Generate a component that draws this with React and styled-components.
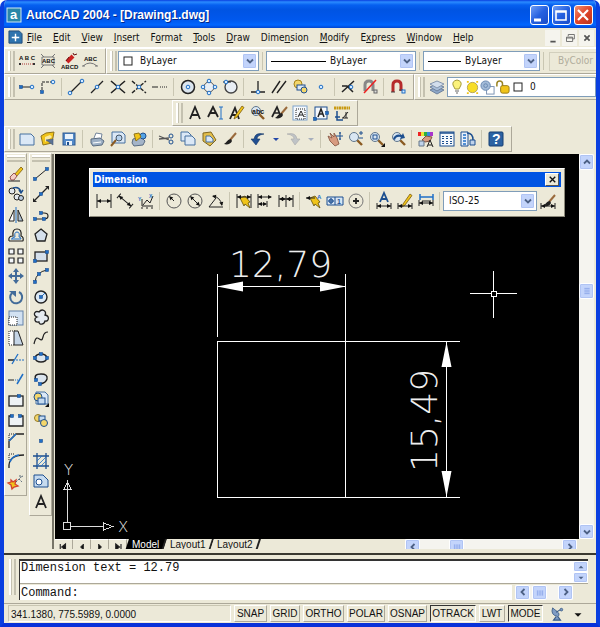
import React from 'react'
import styled, { createGlobalStyle } from 'styled-components'

const ui = '"DejaVu Sans Condensed", "Liberation Sans", sans-serif'
const arial = '"Liberation Sans", Arial, sans-serif'
const face = '#ece9d8'
const dark = '#222'
const blue = '#1f6fc6'
const navy = '#1d4f8f'
const pale = '#bfd2ea'
const gold = '#f0c419'

const Global = createGlobalStyle`
* { box-sizing: border-box; }
body { margin: 0; background: #fff; }
button, select, input { font: inherit; color: inherit; margin: 0; padding: 0; border: 0; background: none; }
svg { display: block; flex: none; }
`

const Window = styled.div`
display: flex;
flex-direction: column;
min-height: 100vh;
border: 4px solid #0a3fe0;
border-top: 0;
border-bottom-color: #0831d9;
border-radius: 7px 7px 0 0;
background: ${face};
font: 10px/14px ${ui};
color: #111;
overflow: hidden;
`

const TitleBar = styled.header`
display: flex;
align-items: center;
gap: 4px;
height: 28px;
margin: 0 -4px;
padding: 2px 6px 0;
background: linear-gradient(#0a3fe0, #2a8bff 2px, #0660f0 5px, #0054e3 10px, #0058ee 20px, #0166ff 25px, #0144d0);

h1 {
    flex: 1;
    margin: 0;
    font: bold 12px/18px ${arial};
    color: #fff;
    text-shadow: 1px 1px #00288c;
}
`

const WindowButtons = styled.div`
display: flex;
gap: 3px;
padding-right: 1px;
`

const CaptionButton = styled.button`
width: 19px;
height: 20px;
border: 1px solid #fff;
border-radius: 3px;
background: ${(p) => (p.$close ? 'linear-gradient(135deg, #f09070, #e0452a 50%, #b8331b)' : 'linear-gradient(135deg, #6f9df5, #2560e0 50%, #1a4cc8)')};
`

const MenuBar = styled.nav`
display: flex;
align-items: center;
height: 20px;
padding-left: 4px;
border-bottom: 1px solid #fff;
`

const MenuItems = styled.div`
display: flex;
flex: 1;
gap: 11px;
padding-left: 4px;
`

const MdiButton = styled.button`
display: grid;
place-items: center;
width: 15px;
height: 16px;
margin-right: 2px;
background: #f5f4ee;
`

const Row = styled.div`
display: flex;
height: 26px;
padding-left: ${(p) => p.$indent || 0}px;
`

const Toolbar = styled.div`
display: flex;
flex: ${(p) => (p.$grow ? '1' : 'none')};
align-items: center;
min-width: 0;
padding-left: 3px;
padding-right: ${(p) => (p.$grow ? 0 : 5)}px;
border: solid;
border-width: ${(p) => (p.$grow ? '1px 0 1px 1px' : '1px')};
border-color: #fff #aca899 #aca899 #fff;
overflow: hidden;
`

const Grip = styled.span`
flex: none;
width: 7px;
height: ${(p) => p.$h || 20}px;
margin-right: 1px;
border: solid;
border-width: 0 2px 0 2px;
border-color: #c4c1b0 #c4c1b0 #c4c1b0 #fff;
background: linear-gradient(90deg, #c4c1b0 1px, ${face} 1px 3px);
`

const ToolButton = styled.button`
display: grid;
place-items: center;
flex: none;
width: ${(p) => (p.$narrow ? 14 : 21)}px;
height: 20px;
`

const Separator = styled.span`
flex: none;
width: 1px;
height: 18px;
margin: 0 3px;
background: #c9c6b2;
`

const ComboBox = styled.label`
display: flex;
align-items: center;
flex: ${(p) => (p.$w ? 'none' : '1')};
width: ${(p) => (p.$w ? p.$w + 'px' : 'auto')};
height: 20px;
padding: 1px;
border: 1px solid #7f9db9;
background: #fff;

select {
    flex: 1;
    min-width: 0;
    height: 16px;
    padding-left: 4px;
    appearance: none;
    outline: none;
}
`

const ScrollButton = styled.button`
display: grid;
place-items: center;
flex: none;
width: 15px;
height: ${(p) => p.$h || 15}px;
border: 1px solid #fff;
border-radius: 2px;
background: #c3d4fb;
box-shadow: inset 0 0 0 1px #b0c4f4;
overflow: hidden;
`

const Disabled = styled.button`
flex: 1;
height: 19px;
margin-left: 2px;
padding-left: 8px;
border: 1px solid #d2cfbd;
border-right: 0;
color: #b0ad9c;
text-align: left;
`

const Workspace = styled.main`
display: flex;
flex: 1;
min-height: 397px;
`

const Palettes = styled.div`
display: flex;
align-items: flex-start;
width: 48px;
padding-top: 1px;
gap: 2px;
`

const Palette = styled.div`
display: flex;
flex-direction: column;
align-items: center;
justify-content: space-between;
width: 23px;
height: ${(p) => p.$h}px;
padding: 1px 0 4px;
border: 1px solid #fff;
border-right-color: #aca899;
border-bottom-color: #aca899;
`

const PaletteGrip = styled.span`
width: 18px;
height: 7px;
border: solid;
border-width: 2px 0;
border-color: #fff #c4c1b0 #c4c1b0;
background: linear-gradient(#c4c1b0 1px, ${face} 1px);
`

const PaletteButton = styled.button`
display: grid;
place-items: center;
width: 20px;
height: 18px;
`

const Document = styled.section`
display: flex;
flex: 1;
flex-direction: column;
min-width: 0;
margin-top: 2px;
padding: 0 2px 0 1px;
border-left: 2px solid #777568;
`

const View = styled.div`
display: flex;
flex: 1;
min-height: 0;
`

const Canvas = styled.div`
position: relative;
flex: 1;
min-width: 0;
background: #000;
overflow: hidden;
`

const VScroll = styled.div`
display: flex;
flex-direction: column;
width: 15px;
background: #f5f4ef;
`

const HScroll = styled.div`
display: flex;
width: ${(p) => p.$w}px;
background: #f5f4ef;
`

// empty part of a scroll track, sized by its share of the range
const Track = styled.span`
flex: ${(p) => p.$share};
`

const TabStrip = styled.div`
display: flex;
align-items: flex-start;
height: 10px;
padding-right: 17px;
overflow: hidden;
font: 10px/12px ${arial};
`

const TabArrow = styled.button`
display: grid;
place-items: center;
flex: none;
width: 18px;
height: 14px;
border-right: 1px solid #aca899;
border-top: 1px solid #fff;
`

const SheetTab = styled.button`
flex: none;
height: 12px;
padding: 0 4px 0 5px;
border-right: 2px solid #222;
background: ${(p) => (p.$active ? '#000' : face)};
color: ${(p) => (p.$active ? '#fff' : '#111')};
transform: skewX(-18deg);

span {
    display: block;
    transform: skewX(18deg);
}
`

const FloatingBar = styled.div`
position: absolute;
left: 34px;
top: 14px;
width: 476px;
padding: 3px;
border: 1px solid #fff;
border-right-color: #8c897a;
border-bottom-color: #8c897a;
background: ${face};

header {
    display: flex;
    align-items: center;
    justify-content: space-between;
    height: 15px;
    padding: 0 2px 0 1px;
    background: #0054e3;
    color: #fff;
    font: bold 10px/14px ${ui};
}
header button {
    display: grid;
    place-items: center;
    width: 14px;
    height: 13px;
    background: ${face};
    border: 1px solid #fff;
    border-right-color: #555;
    border-bottom-color: #555;
}
`

const FloatingTools = styled.div`
display: flex;
align-items: center;
height: 25px;
margin-top: 1px;
`

const CommandDock = styled.section`
display: flex;
margin-top: 4px;
padding: 4px 8px 3px 5px;
border-top: 2px solid #3a3931;
gap: 2px;
`

const CommandWindow = styled.div`
flex: 1;
min-width: 0;
border-top: 2px solid #333;
border-left: 1px solid #333;
font: 12px/14px "Liberation Mono", "Courier New", monospace;
`

const History = styled.div`
display: flex;
height: 23px;
justify-content: space-between;
padding-left: 1px;
background: #fff;
border-bottom: 1px solid #aca899;
line-height: 15px;
`

const Prompt = styled.div`
display: flex;
align-items: center;
height: 16px;
padding-right: 15px;

label {
    padding-left: 1px;
}
input {
    flex: 1;
    min-width: 0;
    margin-right: 3px;
    outline: none;
}
label, input {
    height: 15px;
    line-height: 17px;
    background: #fff;
}
`

const StatusBar = styled.footer`
display: flex;
align-items: center;
height: 20px;
padding-left: 4px;
border-top: 1px solid #aca899;
font: 10px/14px ${arial};
`

const Coordinates = styled.div`
width: 223px;
height: 17px;
margin-right: 3px;
padding: 2px 2px 0;
border: 1px solid #c9c6b2;
border-right-color: #fff;
border-bottom-color: #fff;
`

const StatusToggle = styled.button`
width: ${(p) => p.$w}px;
height: 17px;
margin-right: 3px;
white-space: nowrap;
border: 1px solid;
border-color: ${(p) => (p.$on ? '#333 #fff #fff #333' : '#fff #aca899 #aca899 #fff')};
`

const Dot = ({ x, y }) => <circle cx={x} cy={y} r="1.8" fill="#d8ecff" stroke={blue} />
const Sq = ({ x, y }) => <rect x={x - 1.5} y={y - 1.5} width="3" height="3" fill={blue} stroke={navy} strokeWidth=".6" />
const Arrow = ({ x, y, r = 0 }) => <path d="M0 0 4-2V2Z" fill="#111" stroke="none" transform={`translate(${x} ${y}) rotate(${r})`} />
const Letters = ({ x = 0, y, size = 6, children, fill = '#111' }) => (
    <text x={x} y={y} fontSize={size} fontFamily="Liberation Sans" fontWeight="bold" fill={fill} stroke="none">{children}</text>
)
const Glass = ({ x = 6, y = 6 }) => (
    <>
        <path d={`M${x + 3} ${y + 3}l5 5`} stroke="#8a5a22" strokeWidth="2.4" />
        <circle cx={x} cy={y} r="4.5" fill="#d9e6f2" stroke="#60768c" />
    </>
)
const Pencil = () => <path d="M6 11 13 1l2 1.500L8 12l-3 2Z" fill={gold} stroke="#7a5a10" strokeWidth=".8" />
const Brush = ({ x = 0 }) => (
    <g transform={`translate(${x} 0)`}>
        <path d="m14 2-6 7" stroke="#9a6a3c" strokeWidth="2" />
        <path d="M9 8c-3 0-4 3-7 5 3 1 7 0 8-3Z" fill="#222" stroke="none" />
    </g>
)
const Bolt = () => <path d="M4 5 9 3l5 6-2 1 2 5-5-4-1 2Z" fill={gold} stroke="#5f4c08" strokeWidth=".8" />
const Bracket = ({ y = 11, x1 = 1, x2 = 15, h = 3 }) => (
    <>
        <path d={`M${x1} ${y - h}v${h * 2}M${x2} ${y - h}v${h * 2}M${x1} ${y}H${x2}`} />
        <Arrow x={x1} y={y} />
        <Arrow x={x2} y={y} r={180} />
    </>
)
const Page = ({ x, y, w = 10, h = 10 }) => <path d={`M${x} ${y}h${w - 3}l3 3v${h - 3}h-${w}Z`} fill="#dbe8f6" stroke="#47709f" />

const icons = {
    text1: <><Letters x={0} y={7} size={6}>A B C</Letters><path d="M1 11h14" stroke="#a33" strokeDasharray="1 1" /><path d="M0 10h2v2H0ZM14 10h2v2h-2Z" fill="#333" stroke="none" /></>,
    text2: <><path d="m1 1 3 3M15 1l-3 3M1 15l3-3M15 15l-3-3M2 4h12v8H2Z" stroke="#777" /><Letters x={2} y={10} size={6}>ABC</Letters></>,
    text3: <><path d="m12 3-6 6" stroke="#c22" strokeWidth="4" /><path d="m5 8 3-4M12 0l1 2 3-1" stroke="#611" /><Letters x={0} y={16} size={6}>ABCD</Letters></>,
    text4: <><Letters x={2} y={8} size={6}>ABC</Letters><path d="M1 13q7-6 14 0" stroke="#777" /><path d="M0 13h3M13 13h3" stroke="#777" /></>,
    track: <><path d="M3 8h10" /><Sq x={2} y={8} /><Dot x={13} y={8} /></>,
    from: <><path d="M2 11V3h10" strokeDasharray="3 1" /><Sq x={2} y={13} /><Dot x={13} y={3} /></>,
    endpoint: <><path d="M2 14 14 2" strokeWidth="1.3" /><Dot x={2} y={14} /><Dot x={14} y={2} /></>,
    midpoint: <><path d="M2 14 14 2" strokeWidth="1.3" /><Dot x={8} y={8} /></>,
    intersect: <><path d="M1 2 15 14M1 14 15 2" strokeWidth="1.6" /><Dot x={8} y={8} /></>,
    apparent: <><path d="M1 2 15 14M1 14 15 2" strokeWidth="1.4" strokeDasharray="4 1.500" /><Dot x={8} y={8} /></>,
    extension: <path d="M0 8h6M8 8h1M10 8h1M12 8h1M14 8h1" />,
    center: <><circle cx="8" cy="8" r="6.500" strokeWidth="1.500" fill="#dbe5ee" /><Dot x={8} y={8} /></>,
    quadrant: <><circle cx="8" cy="8" r="5" stroke="#555" fill="#e8eef4" /><Dot x={8} y={2} /><Dot x={8} y={14} /><Dot x={2} y={8} /><Dot x={14} y={8} /></>,
    tangent: <><circle cx="9" cy="8" r="6" strokeWidth="1.400" stroke="#444" fill="#e8eef4" /><path d="M1 3h8" /><Dot x={4} y={3} /></>,
    perpendicular: <><path d="M1 13h14M8 12V2" strokeWidth="1.300" /><Dot x={8} y={13} /></>,
    parallel: <path d="M1 14 9 2M6 14 15 2" strokeWidth="1.400" />,
    insert: <><circle cx="6" cy="5" r="4" fill="#f4d76b" stroke="#a5831a" /><rect x="5" y="6" width="8" height="5" fill="#ddeaf6" stroke={navy} /><circle cx="12" cy="11" r="3" fill="#f4d76b" stroke={navy} /></>,
    node: <Dot x={8} y={8} />,
    nearest: <><path d="M1 13 13 2M1 7h5l6 6" strokeWidth="1.500" /><Dot x={10} y={8} /></>,
    none: <><path d="M3 12V6q0-4 4-4t4 4v6" strokeWidth="3" stroke="#888" /><path d="M2 14 14 1" stroke="#e22" strokeWidth="1.500" /><rect x="12" y="11" width="3" height="3" fill="#ddd" stroke="#666" /></>,
    snap: <><path d="M3 13V6q0-4 4-4t4 4v6" strokeWidth="3" stroke="#b52a2a" /><path d="M1 13h4M9 11h4" stroke="#444" /><rect x="12" y="11" width="3" height="3" fill="#d8ecff" stroke={blue} /></>,
    layers: <><path d="m1 11 7-3 7 3-7 4Z" fill="#8da7c8" stroke="#6e819c" /><path d="m1 8 7-3 7 3-7 4Z" fill="#a9bfda" stroke="#6e819c" /><path d="m1 5 7-3 7 3-7 4Z" fill="#d2deec" stroke="#8596ad" /></>,
    letter: <path d="M3 14 8 2l5 12M5 10h6" strokeWidth="1.800" />,
    letterEdit: <><path d="m0 12 5-10 5 10M2 8h6" strokeWidth="1.800" /><path d="M11 2h4M13 2v12M11 14h4" stroke={blue} /></>,
    letterPencil: <><path d="m1 14 5-11 4 11M3 10h5" strokeWidth="1.800" /><Pencil /></>,
    find: <><Glass /><Letters x={2} y={9} size={7}>abc</Letters></>,
    letterBrush: <><path d="m1 12 5-10 4 10M3 8h5" strokeWidth="1.700" /><Brush x={2} /></>,
    letterDash: <><rect x="1" y="1" width="14" height="14" fill="#f6f9fc" stroke="#7fa3cc" /><rect x="4" y="4" width="9" height="10" strokeDasharray="1 1" /><path d="m6 12 3-6 3 6M7 10h4" /></>,
    letterBox: <><rect x="2" y="2" width="12" height="12" fill="#f6f9fc" stroke={navy} /><path d="m5 12 3-8 3 8M6 9h4" strokeWidth="1.500" /><Sq x={2} y={14} /><Sq x={14} y={8} /></>,
    convert: <><path d="M0 3h16" stroke="#c99a12" strokeWidth="3" strokeDasharray="2 .5" /><path d="M3 6v9h6M1 12h5" stroke={navy} strokeWidth="1.500" /><path d="m9 13 5-6M8 13h6M12 7v6" /></>,
    new: <Page x={1} y={3} w={14} h={11} />,
    open: <><path d="m1 5 5-3 8-1-2 11-9 2Z" fill={gold} stroke="#8f731b" /><path d="m5 6 5-2 2 2-7 5Z" fill="#f9e9a0" stroke="none" /><path d="m6 9 7 5V8Z" fill="#5b7395" stroke="#44597a" strokeWidth=".6" /></>,
    save: <><rect x="2" y="2" width="12" height="12" fill="#5289c8" stroke="#315c92" /><path d="M4 3h8v5H4ZM5 10h6v4H5Z" fill="#eaf3fb" stroke="none" /><path d="M6 11h2v3H6Z" fill={navy} stroke="none" /></>,
    print: <><path d="m5 7 2-5 6 1-1 5" fill="#fff" stroke="#718399" /><path d="m2 8 9-1 4 3-2 4-9 1-2-3Z" fill="#9cafc4" stroke="#596b80" /><path d="m4 12 8-1" stroke="#fff" /></>,
    preview: <><Page x={2} y={1} w={13} h={11} /><path d="m6 9-5 6" stroke="#8a5a22" strokeWidth="2" /><circle cx="9" cy="7" r="3" fill="#b5d1ed" stroke="#456" /></>,
    publish: <><path d="m2 8 8-2 4 4-2 4-9 1-2-3Z" fill="#a4b4c8" stroke="#596b80" /><circle cx="12" cy="5" r="3" fill="#54a3e4" stroke={navy} /><path d="m3 3 5-1 2 4-5 4Z" fill={gold} stroke="#8f731b" /></>,
    cut: <><path d="M0 5l10 4M0 8l10-1" stroke="#555" strokeWidth="1.300" /><circle cx="12" cy="5" r="2" stroke={navy} /><circle cx="12" cy="11" r="2" stroke={navy} /></>,
    copy: <><Page x={1} y={1} w={10} h={9} /><Page x={5} y={5} w={10} h={9} /></>,
    paste: <><path d="m2 2 8-1 5 8-6 6-7-5Z" fill="#e2bd4a" stroke="#80671f" /><Page x={5} y={5} w={7} h={6} /></>,
    match: <Brush />,
    undo: <path d="M14 3Q5 1 4 8H1l5 6 4-6H7q0-4 7-5Z" fill="#214f91" stroke="#163866" strokeWidth=".6" />,
    redo: <path d="M2 3q9-2 10 5h3l-5 6-4-6h3q0-4-7-5Z" fill="#bfc3c6" stroke="#aaa" strokeWidth=".6" />,
    drop: <path d="M5 7h6L8 10Z" fill="#2448a8" stroke="none" />,
    dropOff: <path d="M5 7h6L8 10Z" fill="#a7afbd" stroke="none" />,
    pan: <><path d="m1 5 4 2-2-5 4 4V2l3 5 2 6-4 2-5-5Z" fill="#d79b80" stroke="#80513f" strokeWidth=".8" /><path d="M13 1v8M9 5h7M12 2h2M12 8h2" stroke={navy} /></>,
    zoomRt: <><Glass /><path d="M13 0v4M11 2h4M11 7h4" stroke={navy} /></>,
    zoomWin: <><Glass /><rect x="4" y="4" width="4" height="4" stroke={navy} /><path d="m12 16 4-4v4Z" fill="#111" stroke="none" /></>,
    zoomPrev: <><Glass x={7} /><path d="M3 8q2-6 9-4l1-2 2 5-5 1 1-2Q6 5 5 9Z" fill={navy} stroke="none" /></>,
    props: <><path d="M0 1h3v4H0Z" fill="#e22" stroke="none" /><path d="M3 1h3v4H3Z" fill="#e8e337" stroke="none" /><path d="M6 1h3v4H6Z" fill="#2cae44" stroke="none" /><path d="M9 1h3v4H9Z" fill="#38d" stroke="none" /><path d="M12 1h3v4h-3Z" fill="#a3c" stroke="none" /><path d="m4 9 4-4 6 1-2 4-5 1Z" fill="#d79b80" stroke="#80513f" /><path d="M1 10h5v5H1Z" fill={pale} stroke="#678" /><path d="m9 16 3-7 3 7M10 14h4" /></>,
    design: <><rect x="1" y="1" width="14" height="14" fill="#f6f9fc" stroke={navy} /><path d="M1 2h14" stroke={navy} strokeWidth="1.500" /><path d="M4 5v3M4 10v3M12 5v3M12 10v3M8 5v3M8 10v3" stroke={navy} strokeWidth="2" strokeDasharray="1 1" /></>,
    palettes: <><path d="M1 1h7v14H1Z" fill="#e7f0fa" stroke={navy} /><path d="M3 4h3M3 7h3M3 10h3M3 13h3" stroke={blue} strokeWidth="1.500" /><path d="M7 2q6 0 6 7" stroke={navy} strokeWidth="1.500" /><path d="M10 9h5v5h-5Z" fill={pale} stroke={navy} /></>,
    help: <><rect x="1" y="1" width="14" height="14" rx="1" fill="#2c62a2" stroke="#173f72" /><Letters x={4} y={13} size={14} fill="#fff">?</Letters></>,
    erase: <><path d="m6 9 7-8 2 2-7 8Z" fill={gold} stroke="#7a5a10" strokeWidth=".8" /><path d="m2 11 4-4 3 3-3 4H3Z" fill="#f4cfc7" stroke="#955" /><path d="M0 15h12" /></>,
    copyObj: <><circle cx="4" cy="5" r="3" fill="#e2e8ee" /><circle cx="9" cy="11" r="3" fill="#e2e8ee" /><circle cx="13" cy="12" r="2.500" fill="#b9cde4" /><path d="M5 2q6-2 8 4M11 4l2 3 2-3" stroke={navy} strokeWidth="1.500" /></>,
    mirror: <><path d="M6 3v11H1Z" fill="#fff" /><path d="M10 3v11h5Z" fill="#aebfce" /><path d="M8 0v16" stroke={blue} /></>,
    offset: <><path d="M1 14h14M1 14q-1-5 4-5-1-7 4-7t4 7q3 1 2 5" strokeWidth="1.200" /><path d="M3 12h10M4 12q0-2 3-2-1-5 2-5t2 5q2 0 2 2" stroke={blue} /></>,
    array: <g fill="#f5f8fb" strokeWidth="1.200"><path d="M1 1h5v5H1ZM10 1h5v5h-5ZM1 10h5v5H1ZM10 10h5v5h-5Z" /></g>,
    move: <><path d="M8 3v10M3 8h10" stroke="#426b99" strokeWidth="2" /><path d="m8 0 3 4H5ZM8 16l3-4H5ZM0 8l4-3v6ZM16 8l-4-3v6Z" fill="#426b99" stroke="none" /></>,
    rotate: <><path d="M4 4a6 6 0 1 0 7-1" stroke="#426b99" strokeWidth="2" /><path d="M1 2h7v6Z" fill="#426b99" stroke="none" /></>,
    scale: <><rect x="1" y="1" width="14" height="14" fill="#d2e1f1" stroke="#6483aa" /><rect x="1" y="7" width="8" height="8" fill="#fff" strokeDasharray="1 1" /></>,
    stretch: <><path d="M1 1v14h6V1Z" strokeDasharray="1 1" fill="#fff" /><path d="M6 1v14h9L10 1Z" fill="#c5d5e6" /></>,
    trim: <><path d="M0 9h6" strokeWidth="1.500" /><path d="M8 9h8" stroke={blue} strokeDasharray="2 1" /><path d="m4 13 6-10" stroke={blue} strokeWidth="1.300" /></>,
    extend: <><path d="M0 9h6" /><path d="M7 9h4" stroke={blue} strokeDasharray="1 1" /><path d="m9 13 6-10" stroke={blue} strokeWidth="1.500" /></>,
    breakPt: <><rect x="1" y="4" width="14" height="10" fill="#eef2f5" strokeWidth="1.300" /><Sq x={11} y={4} /></>,
    break: <><path d="M4 4H1v10h14V4h-3" fill="#eef2f5" strokeWidth="1.300" /><Sq x={4} y={4} /><Sq x={12} y={4} /></>,
    chamfer: <><path d="M1 15V8l7-7h8" strokeWidth="1.300" /><path d="M1 7V1h6" strokeDasharray="1 1" /><path d="m1 8 7-7" stroke={blue} strokeWidth="1.500" /></>,
    fillet: <><path d="M1 15q-1-13 15-13" strokeWidth="1.300" /><path d="M1 7V1h6" strokeDasharray="1 1" /><path d="M2 9q2-6 9-7" stroke={blue} strokeWidth="1.500" /></>,
    explode: <><path d="m3 6 2 2 3-2-1 4 3 2-4 1-2 2-1-4-3-2 3-1Z" fill={gold} stroke="#d3412d" strokeWidth="1.300" /><path d="m8 8 5-5M11 5l3 3M12 1v2M15 2l-2 1" stroke="#586878" strokeDasharray="2 1" /></>,
    line: <><path d="M2 13 14 3" /><Sq x={2} y={13} /><Sq x={14} y={3} /></>,
    xline: <><path d="M2 14 14 2" strokeWidth="1.300" /><path d="M0 16v-4l4 4ZM16 0v4l-4-4Z" fill="#222" stroke="none" /><Sq x={8} y={8} /></>,
    pline: <><path d="M2 12h9q4 0 4-3t-4-3H9" strokeWidth="1.200" /><Sq x={2} y={12} /><Sq x={11} y={12} /><Sq x={8} y={6} /></>,
    polygon: <path d="m8 2 6 5-2 7H4L2 7Z" fill="#d5e0eb" strokeWidth="1.300" />,
    rectangle: <><rect x="2" y="4" width="12" height="9" fill="#d5e0eb" strokeWidth="1.300" /><Sq x={2} y={13} /><Sq x={14} y={4} /></>,
    arc: <><path d="M2 14Q3 4 14 2" /><Sq x={2} y={14} /><Sq x={6} y={6} /><Sq x={14} y={2} /></>,
    circle: <><circle cx="8" cy="8" r="6" fill="#dde9f3" strokeWidth="1.400" /><path d="m8 8 4-4" stroke={blue} /><Sq x={8} y={8} /></>,
    cloud: <path d="M4 8C-1 6 2 1 6 3c3-4 8-1 6 3 5 1 4 7 0 6-1 4-6 4-6 1-5 1-5-4-2-5Z" fill="#e5ebf0" strokeWidth="1.300" />,
    spline: <path d="M1 14C4 0 8 16 10 7q1-5 5-5" strokeWidth="1.200" />,
    ellipse: <><ellipse cx="8" cy="8" rx="6" ry="4" fill="#dbe5ee" strokeWidth="1.400" /><Sq x={2} y={8} /><Sq x={14} y={8} /><Sq x={8} y={4} /></>,
    ellArc: <><path d="M3 9q-3-6 5-6 7 0 6 5-1 4-7 5" fill="#dbe5ee" strokeWidth="1.400" /><Sq x={3} y={9} /><Sq x={7} y={13} /></>,
    block: <><Page x={3} y={1} w={12} h={12} /><circle cx="5" cy="6" r="4" fill="#f4d76b" stroke={navy} /><rect x="5" y="7" width="7" height="6" fill="#c6dbef" stroke={navy} /><path d="m12 16 4-4v4Z" fill="#111" stroke="none" /></>,
    makeBlock: <><circle cx="5" cy="6" r="3.500" fill="#f4d76b" stroke="#967a22" /><rect x="6" y="4" width="6" height="5" fill="#c6dbef" stroke={navy} /><circle cx="11" cy="11" r="3.500" fill="#f4d76b" stroke={navy} /></>,
    point: <Sq x={8} y={9} />,
    hatch: <><path d="M4 0v16M13 0v16M0 3h16M0 13h16" stroke={navy} strokeWidth="1.300" /><path d="m4 8 5-5M4 13l9-9M8 13l5-5" stroke={blue} strokeWidth=".8" /></>,
    region: <><path d="M1 2h9l5 5v7H1Z" fill="#c6dbef" stroke={navy} /><circle cx="6" cy="9" r="3" fill="#fff" stroke={navy} /></>,
    linear: <Bracket y={8} h={7} />,
    aligned: <g transform="rotate(40 8 8)"><Bracket y={8} x1={0} x2={16} /></g>,
    ordinate: <><path d="M4 6v7h11M5 12l4-5 3 3 3-7" /><path d="M4 14v2M9 14v2M14 14v2" /><Letters x={0} y={8} size={5} fill={blue}>Y</Letters><Letters x={11} y={5} size={5} fill={blue}>X</Letters></>,
    radius: <><circle cx="8" cy="8" r="7" stroke="#555" /><path d="m8 8-4-4" /><Arrow x={3} y={3} r={45} /></>,
    diameter: <><circle cx="8" cy="8" r="7" stroke="#555" /><path d="m4 4 8 8" /><Arrow x={3} y={3} r={45} /><Arrow x={13} y={13} r={225} /></>,
    angular: <><path d="M1 14 8 5M1 14h14M5 3q7 1 9 9" /><Arrow x={14} y={13} r={260} /><Arrow x={4} y={3} r={10} /></>,
    quick: <><Bolt /><path d="M1 1v14M15 1v14" /><path d="M1 4h14" /><Arrow x={1} y={4} /><Arrow x={15} y={4} r={180} /></>,
    baseline: <><path d="M1 1v14M1 4h13M1 11h8M10 8v6" /><Arrow x={1} y={4} /><Arrow x={15} y={4} r={180} /><Arrow x={1} y={11} /><Arrow x={10} y={11} r={180} /></>,
    continue: <><path d="M1 2v12M8 2v12M15 2v12M1 6h14" /><Arrow x={8} y={6} r={180} /><Arrow x={8} y={6} /><Arrow x={1} y={6} /><Arrow x={15} y={6} r={180} /></>,
    leader: <><Bolt /><path d="M0 5h9" /><Arrow x={0} y={5} /><Letters x={11} y={6} size={6} fill={blue}>A</Letters></>,
    tolerance: <><path d="M0 4h16v8H0ZM8 4v8" fill="#d7e5f4" stroke={navy} /><circle cx="4" cy="8" r="2" stroke={navy} /><path d="M4 5v6M1 8h6" stroke={navy} /><Letters x={10} y={11} size={7} fill={navy}>1</Letters></>,
    centerMark: <><circle cx="8" cy="8" r="7" stroke="#777" /><path d="M8 5v6M5 8h6" strokeWidth="1.800" /></>,
    dimEdit: <><path d="m4 9 4-9 4 9M5 6h6" stroke={navy} strokeWidth="1.800" /><Bracket y={13} /></>,
    dimText: <><Pencil /><Bracket y={13} /></>,
    dimUpdate: <><path d="M2 1v6M15 1v6M2 4h13" stroke={blue} strokeWidth="1.500" /><path d="M4 8h9" /><Bracket y={10} /></>,
    dimStyle: <><Brush x={1} /><Bracket y={13} /></>,
    minimize: <path d="M3 13h7" stroke="#fff" strokeWidth="3" />,
    maximize: <path d="M3 4h10v9H3ZM3 5h10" stroke="#fff" strokeWidth="1.600" />,
    close: <path d="m3 3 10 10M13 3 3 13" stroke="#fff" strokeWidth="2.200" />,
    mdiMin: <path d="M5 12h6" strokeWidth="2" stroke="#555" />,
    mdiRestore: <path d="M6 6V4h7v5h-2M4 7h7v5H4ZM4 8h7" stroke="#666" />,
    mdiClose: <path d="m5 5 6 6M11 5l-6 6" strokeWidth="2" stroke="#555" />,
    smallX: <path d="m4 4 8 8M12 4l-8 8" strokeWidth="2" stroke="#111" />,
    left: <path d="M10 4 6 8l4 4" strokeWidth="2.400" stroke="#4d6185" />,
    right: <path d="m6 4 4 4-4 4" strokeWidth="2.400" stroke="#4d6185" />,
    up: <path d="m4 10 4-4 4 4" strokeWidth="2.400" stroke="#4d6185" />,
    down: <path d="m4 6 4 4 4-4" strokeWidth="2.400" stroke="#4d6185" />,
    thumb: <path d="M5 5v6M7 5v6M9 5v6M11 5v6" stroke="#8aa5e8" />,
    thumbV: <path d="M5 5h6M5 7h6M5 9h6M5 11h6" stroke="#8aa5e8" />,
    tinyUp: <path d="M4 10h8L8 6Z" fill="#4d6185" stroke="none" />,
    tinyDown: <path d="M4 6h8l-4 4Z" fill="#4d6185" stroke="none" />,
    first: <path d="M3 4v8M10 4v8L5 8Z" fill="#111" strokeWidth="1.500" />,
    prev: <path d="M10 4v8L6 8Z" fill="#111" />,
    next: <path d="M6 4v8l4-4Z" fill="#111" />,
    last: <path d="M12 4v8M5 4v8l5-4Z" fill="#111" strokeWidth="1.500" />,
    dish: <><path d="M3 1q-3 8 6 10Q12 8 8 5T3 1Z" fill="#7f9cc4" stroke="#3d5d87" /><path d="m7 6 5-3M7 11l-3 4h8l-3-4" fill="#7f9cc4" stroke="#3d5d87" strokeWidth="1.300" /><circle cx="13" cy="3" r="1.500" fill="#7f9cc4" stroke="#3d5d87" /></>,
    menuDrop: <path d="M4 7h8l-4 4Z" fill="#111" stroke="none" />,
    app: <><rect x="1" y="1" width="14" height="14" fill="#2b86a8" stroke="#cfe9f2" /><Letters x={4} y={12} size={13} fill="#fff">a</Letters></>,
    doc: <><path d="M1 1h11l3 3v10H1Z" fill="#2f74ae" stroke="#234b78" /><path d="M8 4v8M4 8h8" stroke="#fff" strokeWidth="1.500" /><rect x="7" y="7" width="2" height="2" fill="#fff" stroke="none" /></>,
    swatch: <rect x="4" y="4" width="8" height="8" fill="#fff" />,
    bulb: <><path d="M8 1q5 1 4 5l-2 4H6L4 6q-1-4 4-5Z" fill="#fbf27b" stroke="#a49b3a" /><path d="M6 12h4M7 14h2" stroke="#666" /></>,
    sun: <><path d="M2 2h2M12 2h2M2 14h2M12 14h2" stroke={gold} strokeWidth="2" /><circle cx="8" cy="8" r="5.500" fill="#f8dd25" stroke="#b2a35c" /></>,
    freeze: <><rect x="7" y="7" width="8" height="8" fill="#fff" stroke="#778fb0" /><circle cx="6" cy="6" r="5" fill="#a2bad7" stroke="#6787b1" /><circle cx="6" cy="6" r="2" stroke="#6787b1" /></>,
    lock: <><path d="M2 7V4q0-3 3-3t3 3v3" stroke="#9a8422" strokeWidth="1.600" /><rect x="6" y="6" width="9" height="8" rx="2" fill={gold} stroke="#957917" /></>,
}

const Icon = ({ name, size = 16 }) => (
    <svg width={size} height={size} viewBox="0 0 16 16" fill="none" stroke={dark} overflow="visible" aria-hidden="true">{icons[name]}</svg>
)

// '|' marks a separator between groups
const Tools = ({ items }) => items.split(' ').map((name, i) => (
    name === '|'
        ? <Separator key={i} />
        : <ToolButton key={i} aria-label={name} $narrow={name.startsWith('drop')}><Icon name={name} /></ToolButton>
))

const SideBar = ({ items, height }) => (
    <Palette $h={height}>
        <PaletteGrip />
        {items.split(' ').map((name) => (
            <PaletteButton key={name} aria-label={name}><Icon name={name} /></PaletteButton>
        ))}
    </Palette>
)

const Combo = ({ label, value, width, lead, arrow = true }) => (
    <ComboBox $w={width}>
        {lead}
        <select aria-label={label} defaultValue={value}><option>{value}</option></select>
        {arrow && <ScrollButton as="span" $h={16}><Icon name="down" size={12} /></ScrollButton>}
    </ComboBox>
)

const HorizontalScroll = ({ width, before, after, label }) => (
    <HScroll $w={width}>
        <ScrollButton aria-label={`Scroll ${label} left`}><Icon name="left" size={12} /></ScrollButton>
        <Track $share={before} />
        <ScrollButton aria-label={`${label} position`}><Icon name="thumb" size={14} /></ScrollButton>
        <Track $share={after} />
        <ScrollButton aria-label={`Scroll ${label} right`}><Icon name="right" size={12} /></ScrollButton>
    </HScroll>
)

const LineSample = ({ width }) => (
    <svg width={width} height="2"><path d={`M3 1H${width}`} stroke="#000" shapeRendering="crispEdges" /></svg>
)

const menus = [
    ['', 'F', 'ile'], ['', 'E', 'dit'], ['', 'V', 'iew'], ['', 'I', 'nsert'], ['F', 'o', 'rmat'], ['', 'T', 'ools'],
    ['', 'D', 'raw'], ['Dime', 'n', 'sion'], ['', 'M', 'odify'], ['E', 'x', 'press'], ['', 'W', 'indow'], ['', 'H', 'elp'],
]

const toggles = [
    ['SNAP', 33], ['GRID', 30], ['ORTHO', 41], ['POLAR', 38], ['OSNAP', 39], ['OTRACK', 46, true], ['LWT', 26], ['MODE', 35, true],
]

const Drawing = () => (
    <svg width="524" height="385" viewBox="55 154 524 385" fill="none" stroke="#fff" shapeRendering="crispEdges">
        <path d="M217.500 274V337M217.500 342V497M345.500 274V497M217 341.500H460M217 497.500H460" />
        <path d="M218 286.500H345M446.500 342V497" />
        <g fill="#fff" stroke="none" shapeRendering="auto">
            <path d="m217 286.500 26-5v10ZM346 286.500l-26-5v10ZM446.500 342l-5 25h10ZM446.500 497l-5-26h10Z" />
        </g>
        <path d="M493.500 271V291M493.500 296V318M470 293.500H491M496 293.500H517M491.500 291.500h5v5h-5Z" />
        <path d="M63.500 522.500h7v7h-7ZM67.500 522V482M71 526.500H103M64 489.500h7l-3.500-8ZM103.500 523v7l9-3.500Z" stroke="#ddd" />
        <g fill="#eee" stroke="none" fontFamily="DejaVu Sans" fontWeight="200" textRendering="geometricPrecision">
            <text x="229" y="277" fontSize="36">12,79</text>
            <text x="0" y="0" fontSize="36" transform="translate(437 472) rotate(-90)">15,49</text>
            <text x="64" y="475" fontSize="15">Y</text>
            <text x="118" y="532" fontSize="15">X</text>
        </g>
    </svg>
)

const DimensionBar = () => (
    <FloatingBar>
        <header>
            Dimension
            <button aria-label="Close Dimension toolbar"><Icon name="smallX" size={11} /></button>
        </header>
        <FloatingTools>
            <Tools items="linear aligned ordinate | radius diameter angular | quick baseline continue | leader tolerance centerMark | dimEdit dimText dimUpdate |" />
            <Combo label="Dimension style" value="ISO-25" width={94} />
            <Tools items="dimStyle" />
        </FloatingTools>
    </FloatingBar>
)

const App = () => {
    return (
        <>
            <Global />
            <Window>
                <TitleBar>
                    <Icon name="app" />
                    <h1>AutoCAD 2004 - [Drawing1.dwg]</h1>
                    <WindowButtons>
                        <CaptionButton aria-label="Minimize"><Icon name="minimize" /></CaptionButton>
                        <CaptionButton aria-label="Maximize"><Icon name="maximize" /></CaptionButton>
                        <CaptionButton aria-label="Close" $close><Icon name="close" /></CaptionButton>
                    </WindowButtons>
                </TitleBar>

                <MenuBar>
                    <Icon name="doc" size={15} />
                    <MenuItems>
                        {menus.map(([before, key, after]) => (
                            <button key={before + key + after}>{before}<u>{key}</u>{after}</button>
                        ))}
                    </MenuItems>
                    <MdiButton aria-label="Minimize drawing"><Icon name="mdiMin" size={14} /></MdiButton>
                    <MdiButton aria-label="Restore drawing"><Icon name="mdiRestore" size={14} /></MdiButton>
                    <MdiButton aria-label="Close drawing"><Icon name="mdiClose" size={14} /></MdiButton>
                </MenuBar>

                <Row>
                    <Toolbar>
                        <Grip />
                        <Tools items="text1 text2 text3 text4" />
                    </Toolbar>
                    <Toolbar $grow>
                        <Grip />
                        <Combo label="Color" value="ByLayer" width={141} lead={<Icon name="swatch" />} />
                        <Separator />
                        <Combo label="Linetype" value="ByLayer" width={150} lead={<LineSample width={58} />} />
                        <Separator />
                        <Combo label="Lineweight" value="ByLayer" width={117} lead={<LineSample width={36} />} />
                        <Separator />
                        <Disabled disabled>ByColor</Disabled>
                    </Toolbar>
                </Row>

                <Row>
                    <Toolbar>
                        <Grip />
                        <Tools items="track from | endpoint midpoint intersect apparent extension | center quadrant tangent | perpendicular parallel insert node | nearest none | snap" />
                    </Toolbar>
                    <Toolbar $grow>
                        <Grip />
                        <Tools items="layers" />
                        <Combo
                            label="Layer"
                            value="0"
                            arrow={false}
                            lead={<><Icon name="bulb" /><Icon name="sun" size={15} /><Icon name="freeze" size={15} /><Icon name="lock" size={15} /><Icon name="swatch" /></>}
                        />
                    </Toolbar>
                </Row>

                <Row $indent={168}>
                    <Toolbar>
                        <Grip />
                        <Tools items="letter letterEdit letterPencil find letterBrush letterDash letterBox convert" />
                    </Toolbar>
                </Row>

                <Row>
                    <Toolbar>
                        <Grip />
                        <Tools items="new open save | print preview publish | cut copy paste match | undo drop redo dropOff | pan zoomRt zoomWin zoomPrev | props design palettes | help" />
                    </Toolbar>
                </Row>

                <Workspace>
                    <Palettes>
                        <SideBar height={343} items="erase copyObj mirror offset array move rotate scale stretch trim extend breakPt break chamfer fillet explode" />
                        <SideBar height={363} items="line xline pline polygon rectangle arc circle cloud spline ellipse ellArc block makeBlock point hatch region letter" />
                    </Palettes>
                    <Document>
                        <View>
                            <Canvas>
                                <Drawing />
                                <DimensionBar />
                            </Canvas>
                            <VScroll>
                                <ScrollButton aria-label="Scroll up" $h={16}><Icon name="up" size={12} /></ScrollButton>
                                <Track $share={1} />
                                <ScrollButton aria-label="Vertical position" $h={16}><Icon name="thumbV" size={14} /></ScrollButton>
                                <Track $share={2} />
                                <ScrollButton aria-label="Scroll down"><Icon name="down" size={12} /></ScrollButton>
                            </VScroll>
                        </View>
                        <TabStrip>
                            <TabArrow aria-label="First tab"><Icon name="first" size={12} /></TabArrow>
                            <TabArrow aria-label="Previous tab"><Icon name="prev" size={12} /></TabArrow>
                            <TabArrow aria-label="Next tab"><Icon name="next" size={12} /></TabArrow>
                            <TabArrow aria-label="Last tab"><Icon name="last" size={12} /></TabArrow>
                            <SheetTab $active><span>Model</span></SheetTab>
                            <SheetTab><span>Layout1</span></SheetTab>
                            <SheetTab><span>Layout2</span></SheetTab>
                            <Track $share={1} />
                            <HorizontalScroll width={172} before={3} after={10} label="drawing" />
                        </TabStrip>
                    </Document>
                </Workspace>

                <CommandDock>
                    <Grip $h={36} />
                    <CommandWindow>
                        <History>
                            Dimension text = 12.79
                            <div>
                                <ScrollButton aria-label="Older lines" $h={11}><Icon name="tinyUp" size={10} /></ScrollButton>
                                <ScrollButton aria-label="Newer lines" $h={11}><Icon name="tinyDown" size={10} /></ScrollButton>
                            </div>
                        </History>
                        <Prompt>
                            <label htmlFor="command">Command:</label>
                            <input id="command" />
                            <HorizontalScroll width={58} before={1} after={5} label="command" />
                        </Prompt>
                    </CommandWindow>
                </CommandDock>

                <StatusBar>
                    <Coordinates>341.1380, 775.5989, 0.0000</Coordinates>
                    {toggles.map(([name, width, on]) => (
                        <StatusToggle key={name} $w={width} $on={on} aria-pressed={!!on}>{name}</StatusToggle>
                    ))}
                    <ToolButton aria-label="Communication center"><Icon name="dish" size={14} /></ToolButton>
                    <ToolButton aria-label="Status bar menu"><Icon name="menuDrop" size={14} /></ToolButton>
                </StatusBar>
            </Window>
        </>
    )
}

export default App
